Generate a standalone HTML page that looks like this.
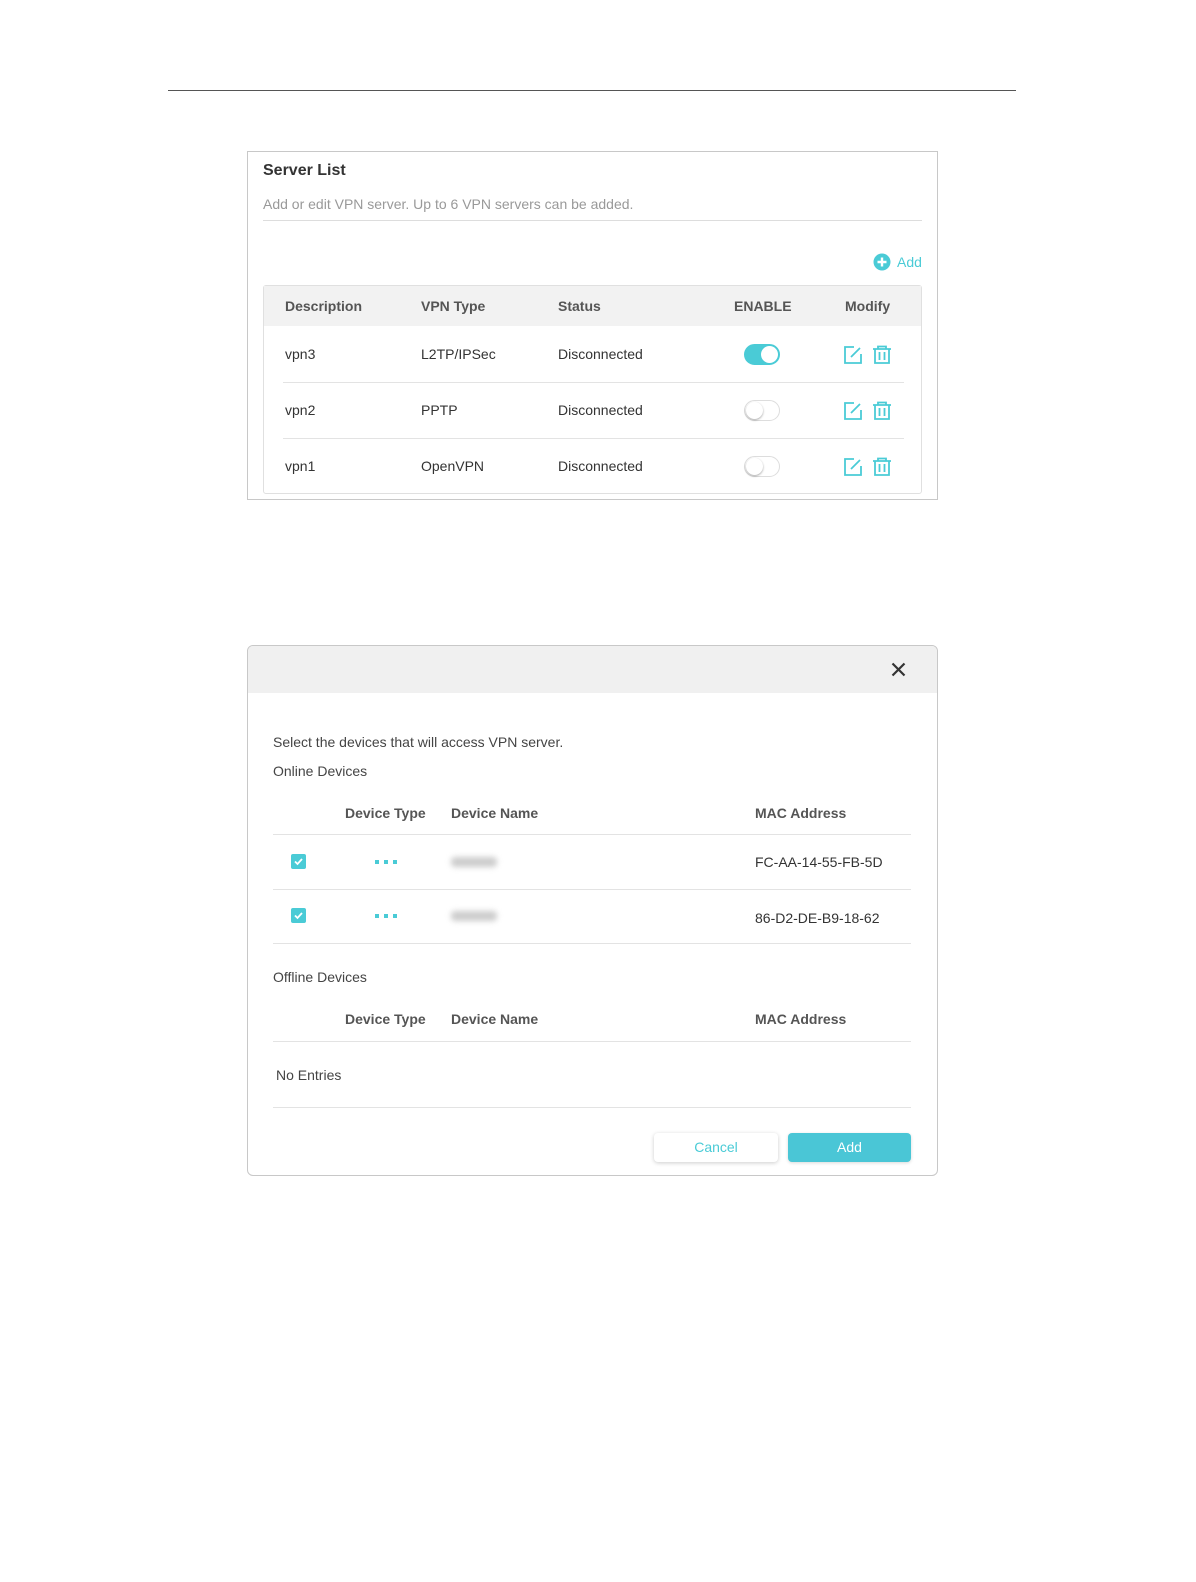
<!DOCTYPE html>
<html><head><meta charset="utf-8"><style>
*{margin:0;padding:0;box-sizing:border-box}
body{width:1196px;height:1582px;background:#fff;position:relative;font-family:"Liberation Sans",Arial,sans-serif;color:#333;overflow:hidden}
.a{position:absolute;white-space:nowrap}
.t{font-size:14px;line-height:16px;color:#333}
.h{font-size:14px;line-height:16px;font-weight:bold;color:#555}
.ln{position:absolute;height:1px;background:#e3e3e3}
.tog{position:absolute;width:36px;height:21px;border-radius:11px;border:1px solid #ddd;background:#fff}
.tog::after{content:"";position:absolute;left:1px;top:1px;width:17px;height:17px;border-radius:50%;background:#fff;box-shadow:0 1px 2px rgba(0,0,0,.35)}
.tog.on{background:#4acbd6;border-color:#4acbd6}
.tog.on::after{left:16px;box-shadow:none}
.cb{position:absolute;width:15px;height:15px;background:#4acbd6;border-radius:2px}
.dots{position:absolute;font-size:0}
.dots i{display:inline-block;width:4px;height:4px;background:#4acbd6;margin-right:5px}
.blur{position:absolute;width:46px;height:10px;background:#ccc;filter:blur(3px);border-radius:4px}
</style></head><body>
<div class="a" style="left:168px;top:90px;width:848px;height:1px;background:#555"></div>

<div class="a" style="left:247px;top:151px;width:691px;height:349px;border:1px solid #c8c8c8"></div>
<div class="a" style="left:263px;top:162px;font-size:16px;font-weight:bold;color:#333">Server List</div>
<div class="a" style="left:263px;top:196px;font-size:14px;color:#999">Add or edit VPN server. Up to 6 VPN servers can be added.</div>
<div class="ln" style="left:263px;top:220px;width:659px;background:#ddd"></div>
<svg class="a" style="left:873px;top:253px" width="18" height="18" viewBox="0 0 18 18"><circle cx="9" cy="9" r="8.5" fill="#4acbd6"/><path d="M9 4.5v9M4.5 9h9" stroke="#fff" stroke-width="2.4"/></svg>
<div class="a" style="left:897px;top:254px;font-size:14px;color:#4acbd6">Add</div>

<div class="a" style="left:263px;top:285px;width:659px;height:209px;border:1px solid #e0e0e0;border-radius:3px"></div>
<div class="a" style="left:264px;top:286px;width:657px;height:40px;background:#f2f2f2"></div>
<div class="a h" style="left:285px;top:298px">Description</div>
<div class="a h" style="left:421px;top:298px">VPN Type</div>
<div class="a h" style="left:558px;top:298px">Status</div>
<div class="a h" style="left:734px;top:298px">ENABLE</div>
<div class="a h" style="left:845px;top:298px">Modify</div>

<div class="a t" style="left:285px;top:346px">vpn3</div>
<div class="a t" style="left:421px;top:346px">L2TP/IPSec</div>
<div class="a t" style="left:558px;top:346px">Disconnected</div>
<div class="tog on" style="left:744px;top:344px"></div>
<div class="ln" style="left:283px;top:382px;width:621px"></div>
<div class="a t" style="left:285px;top:402px">vpn2</div>
<div class="a t" style="left:421px;top:402px">PPTP</div>
<div class="a t" style="left:558px;top:402px">Disconnected</div>
<div class="tog" style="left:744px;top:400px"></div>
<div class="ln" style="left:283px;top:438px;width:621px"></div>
<div class="a t" style="left:285px;top:458px">vpn1</div>
<div class="a t" style="left:421px;top:458px">OpenVPN</div>
<div class="a t" style="left:558px;top:458px">Disconnected</div>
<div class="tog" style="left:744px;top:456px"></div>

<svg class="a" style="left:843px;top:344px" width="50" height="140" viewBox="0 0 50 140">
<defs><g id="ic" fill="none" stroke="#4acbd6" stroke-width="1.8">
<path d="M11 2H2v16h16V9"/><path d="M8 12l9-9"/>
<path d="M30 4h18M35 4V1.5h8V4M32 4v14h14V4M36.5 7v8M41.5 7v8"/></g></defs>
<use href="#ic" y="1"/><use href="#ic" y="57"/><use href="#ic" y="113"/>
</svg>

<div class="a" style="left:247px;top:645px;width:691px;height:531px;border:1px solid #c8c8c8;border-radius:6px;overflow:hidden">
<div style="height:47px;background:#f0f0f0"></div></div>
<svg class="a" style="left:891px;top:662px" width="15" height="15" viewBox="0 0 15 15"><path d="M1.5 1.5l12 12M13.5 1.5l-12 12" stroke="#333" stroke-width="2.2"/></svg>

<div class="a t" style="left:273px;top:734px;color:#444">Select the devices that will access VPN server.</div>
<div class="a t" style="left:273px;top:763px;color:#444">Online Devices</div>
<div class="a h" style="left:345px;top:805px">Device Type</div>
<div class="a h" style="left:451px;top:805px">Device Name</div>
<div class="a h" style="left:755px;top:805px">MAC Address</div>
<div class="ln" style="left:273px;top:834px;width:638px"></div>
<div class="cb" style="left:291px;top:854px"><svg width="15" height="15"><path d="M4 7.5l2.5 2.5 4.5-5" stroke="#fff" stroke-width="1.8" fill="none"/></svg></div>
<div class="dots" style="left:375px;top:860px"><i></i><i></i><i></i></div>
<div class="blur" style="left:451px;top:857px"></div>
<div class="a t" style="left:755px;top:854px">FC-AA-14-55-FB-5D</div>
<div class="ln" style="left:273px;top:889px;width:638px"></div>
<div class="cb" style="left:291px;top:908px"><svg width="15" height="15"><path d="M4 7.5l2.5 2.5 4.5-5" stroke="#fff" stroke-width="1.8" fill="none"/></svg></div>
<div class="dots" style="left:375px;top:914px"><i></i><i></i><i></i></div>
<div class="blur" style="left:451px;top:911px"></div>
<div class="a t" style="left:755px;top:910px">86-D2-DE-B9-18-62</div>
<div class="ln" style="left:273px;top:943px;width:638px"></div>

<div class="a t" style="left:273px;top:969px;color:#444">Offline Devices</div>
<div class="a h" style="left:345px;top:1011px">Device Type</div>
<div class="a h" style="left:451px;top:1011px">Device Name</div>
<div class="a h" style="left:755px;top:1011px">MAC Address</div>
<div class="ln" style="left:273px;top:1041px;width:638px"></div>
<div class="a t" style="left:276px;top:1067px;color:#444">No Entries</div>
<div class="ln" style="left:273px;top:1107px;width:638px"></div>

<div class="a" style="left:654px;top:1133px;width:124px;height:29px;background:#fff;border-radius:4px;box-shadow:0 1px 4px rgba(0,0,0,.2);text-align:center;line-height:29px;font-size:14px;color:#4acbd6">Cancel</div>
<div class="a" style="left:788px;top:1133px;width:123px;height:29px;background:#4ac6d6;border-radius:4px;box-shadow:0 1px 3px rgba(0,0,0,.15);text-align:center;line-height:29px;font-size:14px;color:#fff">Add</div>
</body></html>
